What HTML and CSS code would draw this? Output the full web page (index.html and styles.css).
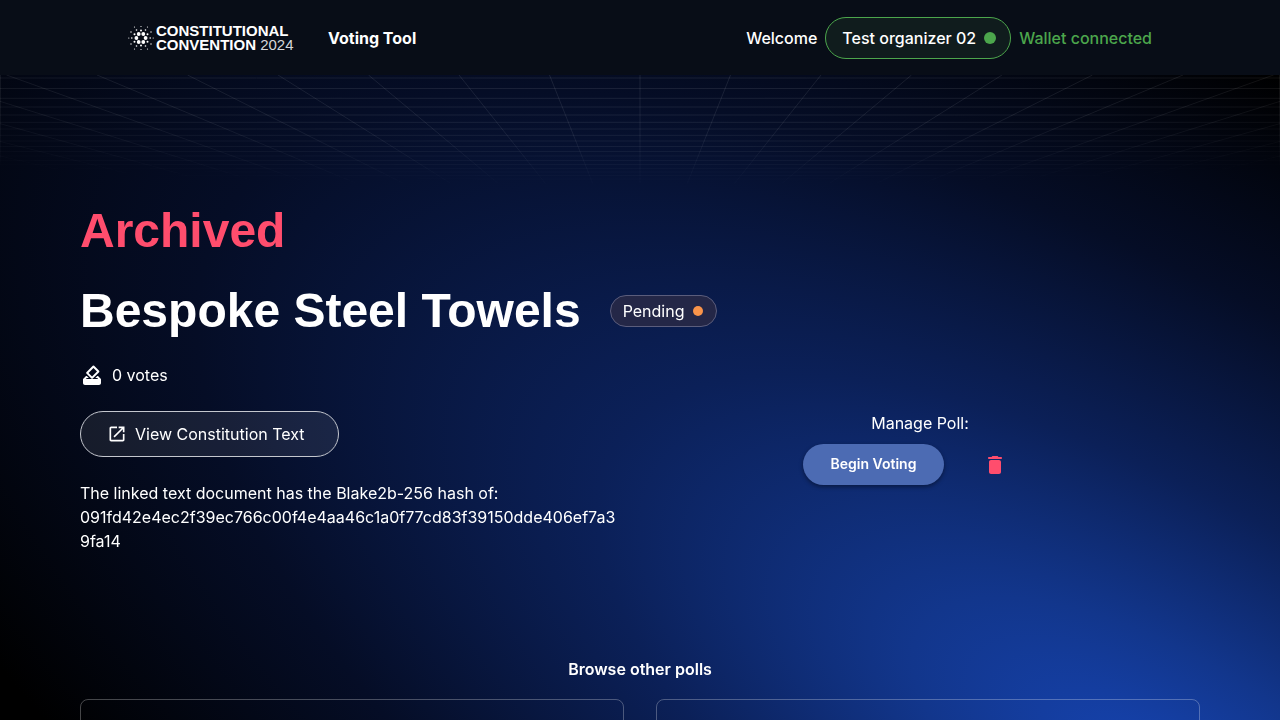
FILE: index.html
```html
<!DOCTYPE html>
<html lang="en">
<head>
<meta charset="utf-8">
<meta name="viewport" content="width=device-width, initial-scale=1">
<title>Voting Tool</title>
<link rel="stylesheet" href="styles.css">
</head>
<body>
<div class="app">
  <svg class="glow" viewBox="0 0 1280 720" preserveAspectRatio="none" aria-hidden="true">
    <defs>
      <radialGradient id="glow" gradientUnits="userSpaceOnUse" cx="0" cy="0" r="1" gradientTransform="translate(1170 780) rotate(31) scale(1620 670)">
        <stop offset="0" stop-color="#1644b2"/>
        <stop offset="0.18" stop-color="#12368c"/>
        <stop offset="0.4" stop-color="#0b2058"/>
        <stop offset="0.68" stop-color="#050d26"/>
        <stop offset="1" stop-color="#000000"/>
      </radialGradient>
    </defs>
    <rect width="1280" height="720" fill="url(#glow)"/>
  </svg>
  <header class="topbar">
    <div class="brand">
      <a class="logo" href="#">
        <svg class="logo-mark" viewBox="0 0 26 26" aria-hidden="true">
          <g fill="#fff">
            <circle cx="10.700" cy="9" r="1.900"/><circle cx="15.300" cy="9" r="1.900"/><circle cx="8.400" cy="13" r="1.900"/><circle cx="17.600" cy="13" r="1.900"/><circle cx="10.700" cy="17" r="1.900"/><circle cx="15.300" cy="17" r="1.900"/>
            <circle cx="13" cy="5.500" r="1"/><circle cx="6.500" cy="9.200" r="1"/><circle cx="19.500" cy="9.200" r="1"/><circle cx="6.500" cy="16.800" r="1"/><circle cx="19.500" cy="16.800" r="1"/><circle cx="13" cy="20.500" r="1"/>
            <circle cx="8.500" cy="5" r=".8"/><circle cx="17.500" cy="5" r=".8"/><circle cx="3.800" cy="13" r=".8"/><circle cx="22.200" cy="13" r=".8"/><circle cx="8.500" cy="21" r=".8"/><circle cx="17.500" cy="21" r=".8"/>
            <circle cx="13" cy="1.500" r=".6"/><circle cx="3" cy="7" r=".7"/><circle cx="23" cy="7" r=".7"/><circle cx="3" cy="19" r=".7"/><circle cx="23" cy="19" r=".7"/><circle cx="13" cy="24.500" r=".6"/>
            <circle cx="6.500" cy="2" r=".6"/><circle cx="19.500" cy="2" r=".6"/><circle cx=".8" cy="13" r=".6"/><circle cx="25.200" cy="13" r=".6"/><circle cx="6.500" cy="24" r=".6"/><circle cx="19.500" cy="24" r=".6"/>
          </g>
        </svg>
        <span class="logo-text"><span>CONSTITUTIONAL</span><span>CONVENTION <span class="logo-year">2024</span></span></span>
      </a>
      <a class="tool-name" href="#">Voting Tool</a>
    </div>
    <div class="session">
      <span>Welcome</span>
      <a class="user-pill" href="#">Test organizer 02 <span class="dot dot-green"></span></a>
      <span class="wallet">Wallet connected</span>
    </div>
  </header>
  <main class="content">
    <svg class="grid" viewBox="0 0 1280 115" preserveAspectRatio="none" aria-hidden="true">
      <defs>
        <radialGradient id="fade" gradientUnits="userSpaceOnUse" cx="0" cy="0" r="1" gradientTransform="translate(640 0) scale(1150 115)">
          <stop offset="0" stop-color="#fff"/>
          <stop offset="0.5" stop-color="#fff" stop-opacity=".85"/>
          <stop offset="1" stop-color="#fff" stop-opacity="0"/>
        </radialGradient>
        <mask id="fadeMask" maskUnits="userSpaceOnUse" x="0" y="0" width="1280" height="115"><rect width="1280" height="115" fill="url(#fade)"/></mask>
      </defs>
      <g mask="url(#fadeMask)" fill="none" stroke="#fff" stroke-opacity=".09">
        <path d="M0 3H1280M0 13.500H1280M0 23.300H1280M0 32H1280M0 40H1280M0 47.300H1280M0 54H1280M0 60.300H1280M0 66H1280M0 71.500H1280M0 76.500H1280M0 81H1280M0 85.500H1280M0 89.500H1280M0 93.300H1280M0 97H1280M0 100.500H1280M0 104H1280M0 107H1280"/>
        <path d="M.5 0V115M1279.500 0V115M640 0V115"/>
        <path d="M549.500 0L640 227L730.500 0M459 0L640 227L821 0M368.500 0L640 227L911.500 0M278 0L640 227L1002 0M187.500 0L640 227L1092.500 0M97 0L640 227L1183 0M6.500 0L640 227L1273.500 0M-84 0L640 227L1364 0M-174.500 0L640 227L1454.500 0M-265 0L640 227L1545 0M-355.500 0L640 227L1635.500 0"/>
      </g>
    </svg>
    <div class="page">
      <h2 class="heading archived">Archived</h2>
      <div class="title-row">
        <h1 class="heading">Bespoke Steel Towels</h1>
        <span class="status">Pending <span class="dot dot-orange"></span></span>
      </div>
      <div class="votes">
        <svg class="icon" viewBox="0 0 24 24" aria-hidden="true"><path fill="currentColor" d="M18 13h-.68l-2 2h1.910L19 17H5l1.780-2h2.050l-2-2H6l-3 3v4c0 1.100.89 2 1.990 2H19c1.100 0 2-.89 2-2v-4l-3-3z"/><path fill="currentColor" d="M4 16h16v3H4z"/><path fill="currentColor" d="M19.110 7.790l-4.950-4.950a.996.996 0 0 0-1.410 0L6.390 9.200a.996.996 0 0 0 0 1.410l4.950 4.950c.39.390 1.020.39 1.410 0l6.360-6.360c.39-.39.39-1.020 0-1.410zm-7.060 5.650L8.510 9.900l4.950-4.950L17 8.490l-4.950 4.950z"/></svg>
        <span>0 votes</span>
      </div>
      <div class="columns">
        <section class="document">
          <a class="view-link" href="#">
            <svg class="icon-small" viewBox="0 0 24 24" aria-hidden="true"><path fill="currentColor" d="M19 19H5V5h7V3H5c-1.110 0-2 .9-2 2v14c0 1.100.89 2 2 2h14c1.100 0 2-.9 2-2v-7h-2v7zM14 3v2h3.590l-9.830 9.830 1.410 1.410L19 6.410V10h2V3h-7z"/></svg>
            View Constitution Text
          </a>
          <p class="hash">The linked text document has the Blake2b-256 hash of: <span class="hash-value">091fd42e4ec2f39ec766c00f4e4aa46c1a0f77cd83f39150dde406ef7a3<wbr>9fa14</span></p>
        </section>
        <section class="manage">
          <p class="manage-label">Manage Poll:</p>
          <div class="manage-actions">
            <button class="begin" type="button">Begin Voting</button>
            <button class="delete" type="button" aria-label="Delete poll">
              <svg class="icon" viewBox="0 0 24 24" aria-hidden="true"><path fill="currentColor" d="M6 19c0 1.100.9 2 2 2h8c1.100 0 2-.9 2-2V9c0-1.100-.9-2-2-2H8c-1.100 0-2 .9-2 2v10zM18 4h-2.500l-.71-.71c-.18-.18-.44-.29-.7-.29H9.910c-.26 0-.52.110-.7.290L8.500 4H6c-.55 0-1 .45-1 1s.45 1 1 1h12c.55 0 1-.45 1-1s-.45-1-1-1z"/></svg>
            </button>
          </div>
        </section>
      </div>
      <h3 class="browse">Browse other polls</h3>
      <div class="polls">
        <article class="poll-card"></article>
        <article class="poll-card"></article>
      </div>
    </div>
  </main>
</div>
</body>
</html>
```
FILE: styles.css
```css
* { box-sizing: border-box; }

body {
  margin: 0;
  background: #000;
  color: #fff;
  font-family: Inter, "Liberation Sans", sans-serif;
  font-size: 16px;
  line-height: 24px;
}

h1, h2, h3, p { margin: 0; }
a { color: inherit; text-decoration: none; }
button { border: 0; font-family: inherit; cursor: pointer; }

.app {
  position: relative;
  isolation: isolate;
  display: flex;
  flex-direction: column;
  height: 100vh;
}

.glow {
  position: absolute;
  z-index: -1;
  inset: 0;
  width: 100%;
  height: 100%;
}

.topbar {
  display: flex;
  flex: none;
  align-items: center;
  justify-content: space-between;
  padding: 16px 10%;
  min-height: 75px;
  background: #080d17;
}

.brand { display: flex; align-items: center; gap: 32px; }
.logo { display: flex; align-items: center; gap: 2px; }
.logo-mark { width: 26px; height: 26px; }

.logo-text {
  display: flex;
  flex-direction: column;
  width: 140px;
  font: bold 15px/14px "Liberation Sans", sans-serif;
  white-space: nowrap;
}

.logo-year { font-weight: 400; color: #d5d7da; }
.tool-name { font-weight: 700; }

.session { display: flex; align-items: center; gap: 8px; font-weight: 500; }

.user-pill {
  display: flex;
  align-items: center;
  gap: 8px;
  padding: 8px 14px 8px 16px;
  border: 1px solid #4ca64c;
  border-radius: 24px;
  background: #101c1d;
}

.wallet { color: #4ca64c; }

.dot { flex: none; border-radius: 50%; }
.dot-green { width: 12px; height: 12px; background: #4ca64c; }
.dot-orange { width: 10px; height: 10px; background: #f9944a; }

.content {
  position: relative;
  flex: 1;
  min-height: 0;
  overflow-y: auto;
  scrollbar-width: none;
}

.grid {
  position: absolute;
  z-index: -1;
  top: 0;
  left: 0;
  width: 100%;
  height: 115px;
}

.page {
  max-width: 1280px;
  margin: 0 auto;
  padding: 128px 80px 48px;
}

.heading {
  font: bold 48px/56px "Liberation Sans", sans-serif;
}

.archived { color: #ff4d6d; }

.title-row {
  display: flex;
  align-items: center;
  gap: 29px;
  margin-top: 24px;
}

.status {
  display: flex;
  align-items: center;
  gap: 9px;
  padding: 3px 13px 3px 12px;
  border: 1px solid #5b5d7c;
  border-radius: 16px;
  background: #242747;
}

.votes {
  display: flex;
  align-items: center;
  gap: 8px;
  margin-top: 24px;
}

.icon { display: block; width: 24px; height: 24px; }
.icon-small { width: 20px; height: 20px; }

.columns {
  display: grid;
  grid-template-columns: 1fr 1fr;
  margin-top: 24px;
}

.view-link {
  display: inline-flex;
  align-items: center;
  gap: 8px;
  padding: 10px 33px 10px 26px;
  border: 1px solid #c4c7ce;
  border-radius: 24px;
  background: rgba(255, 255, 255, 0.08);
}

.hash { margin-top: 24px; }
.hash-value { display: block; }

.manage {
  display: flex;
  flex-direction: column;
  align-items: center;
  gap: 9px;
}

.manage-actions { display: flex; align-items: center; gap: 9px; }

.begin {
  padding: 8px 28px 9px;
  border-radius: 24px;
  background: #4c6bb3;
  box-shadow: 0 2px 4px rgba(0, 0, 0, 0.4);
  color: #fff;
  font-size: 14px;
  font-weight: 600;
  line-height: 24px;
}

.delete {
  padding: 8px 30px;
  background: none;
  color: #ff4d6d;
}

.browse {
  margin-top: 104px;
  font-size: 16px;
  font-weight: 600;
  line-height: 24px;
  text-align: center;
}

.polls {
  display: grid;
  grid-template-columns: 1fr 1fr;
  gap: 32px;
  margin-top: 18px;
}

.poll-card {
  min-height: 160px;
  border: 1px solid rgba(255, 255, 255, 0.27);
  border-radius: 8px;
}
```
